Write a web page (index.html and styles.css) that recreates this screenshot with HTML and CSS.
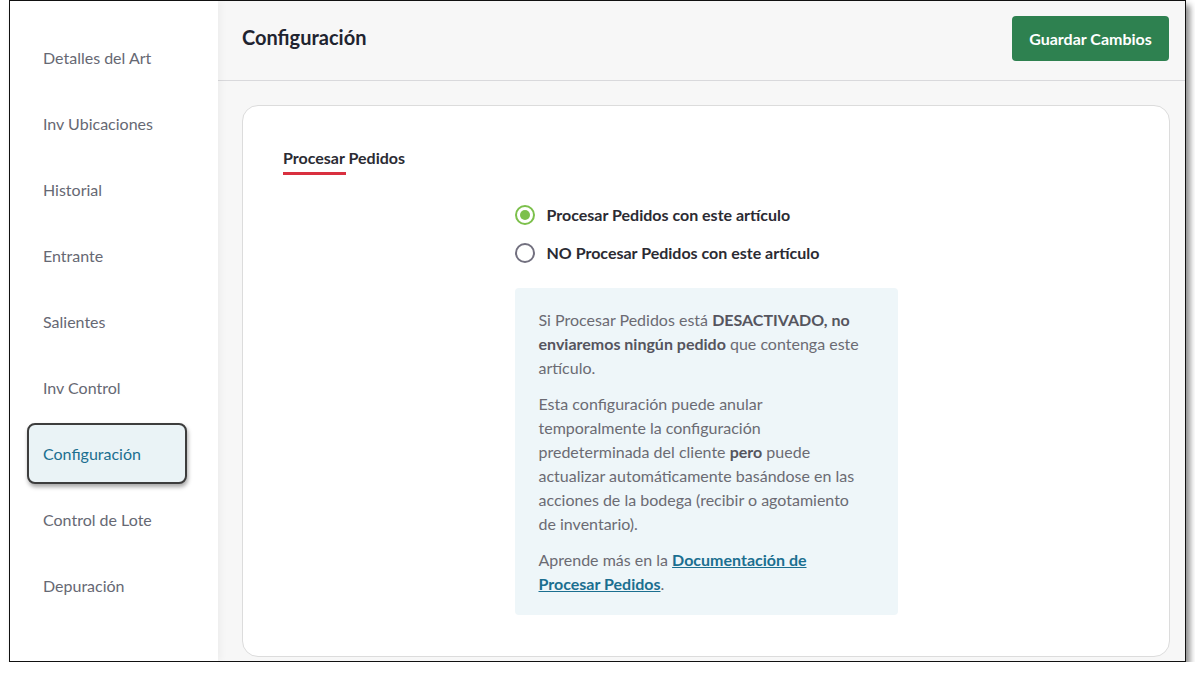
FILE: index.html
```html
<!DOCTYPE html>
<html lang="es">
<head>
<meta charset="utf-8">
<title>Configuración</title>
<link rel="stylesheet" href="styles.css">
</head>
<body>
<div class="frame">
  <nav class="sidebar">
    <a class="nav-item">Detalles del Art</a>
    <a class="nav-item">Inv Ubicaciones</a>
    <a class="nav-item">Historial</a>
    <a class="nav-item">Entrante</a>
    <a class="nav-item">Salientes</a>
    <a class="nav-item">Inv Control</a>
    <a class="nav-item active">Configuración</a>
    <a class="nav-item">Control de Lote</a>
    <a class="nav-item">Depuración</a>
  </nav>
  <main class="main">
    <header class="header">
      <h1 class="title">Configuración</h1>
      <a class="btn-save" role="button">Guardar Cambios</a>
    </header>
    <section class="card">
      <div class="tab">Procesar Pedidos</div>
      <div class="content">
        <div class="options">
          <label class="option">
            <span class="radio checked"></span>
            <span>Procesar Pedidos con este artículo</span>
          </label>
          <label class="option">
            <span class="radio"></span>
            <span>NO Procesar Pedidos con este artículo</span>
          </label>
        </div>
        <div class="info">
          <p>Si Procesar Pedidos está <strong>DESACTIVADO, no enviaremos ningún pedido</strong> que contenga este artículo.</p>
          <p>Esta configuración puede anular temporalmente la configuración predeterminada del cliente <strong>pero</strong> puede actualizar automáticamente basándose en las acciones de la bodega (recibir o agotamiento de inventario).</p>
          <p>Aprende más en la <a class="link">Documentación de Procesar Pedidos</a>.</p>
        </div>
      </div>
    </section>
  </main>
</div>
</body>
</html>
```
FILE: styles.css
```css
* { box-sizing: border-box; }
html, body { margin: 0; padding: 0; background: #fff; }
body {
  font-family: Lato, "Open Sans", "Liberation Sans", sans-serif;
  padding-left: 9px;
}
.frame {
  width: 1177px;
  height: 662px;
  border: 1px solid #111;
  display: flex;
  box-shadow: 4px 5px 6px rgba(0,0,0,0.45);
  background: #f7f7f7;
  overflow: hidden;
}
.sidebar {
  width: 208px;
  flex: none;
  background: #fff;
  padding-top: 23px;
  display: flex;
  flex-direction: column;
  box-shadow: 2px 0 8px rgba(0,0,0,0.05);
  position: relative;
  z-index: 1;
}
.nav-item {
  display: flex;
  align-items: center;
  height: 66px;
  padding-left: 33px;
  font-size: 16px;
  color: #666873;
  text-decoration: none;
}
.nav-item.active {
  height: 61px;
  width: 160px;
  margin: 3px 0 2px 17px;
  padding-left: 14px;
  border: 2px solid #3d3d3d;
  border-radius: 8px;
  background: #eaf3f6;
  color: #1b6f90;
  box-shadow: 1px 3px 4px rgba(0,0,0,0.35);
}
.main {
  flex: 1;
  display: flex;
  flex-direction: column;
  background: #f7f7f7;
}
.header {
  height: 80px;
  border-bottom: 1px solid #d9d9dc;
  display: flex;
  align-items: center;
  justify-content: space-between;
  padding: 0 16px 4px 24px;
}
.title {
  margin: 0 0 3px;
  font-size: 20px;
  font-weight: 700;
  color: #1f2430;
}
.btn-save {
  display: flex;
  align-items: center;
  justify-content: center;
  width: 157px;
  height: 45px;
  border-radius: 4px;
  background: #2e8150;
  color: #fff;
  font-size: 16px;
  font-weight: 700;
  text-decoration: none;
}
.card {
  margin: 24px 15px 0 24px;
  height: 552px;
  background: #fff;
  border: 1px solid #dcdcdc;
  border-radius: 16px;
  padding: 42px 40px 0 40px;
}
.tab {
  display: inline-block;
  font-size: 16px;
  font-weight: 700;
  color: #2b2b33;
  line-height: 20px;
  position: relative;
  padding-bottom: 6px;
}
.tab::after {
  content: "";
  position: absolute;
  left: 0;
  bottom: -1px;
  width: 63px;
  height: 3px;
  background: #d9303f;
}
.content {
  width: 383px;
  margin: 31px auto 0;
}
.options {
  display: flex;
  flex-direction: column;
  gap: 18px;
  margin-bottom: 25px;
}
.option {
  display: flex;
  align-items: center;
  gap: 12px;
  font-size: 16px;
  font-weight: 700;
  color: #2b2b33;
  line-height: 20px;
}
.radio {
  width: 20px;
  height: 20px;
  border-radius: 50%;
  border: 2px solid #72707f;
  flex: none;
  position: relative;
}
.radio.checked {
  border-color: #7cc04b;
}
.radio.checked::after {
  content: "";
  position: absolute;
  left: 3px;
  top: 3px;
  width: 10px;
  height: 10px;
  border-radius: 50%;
  background: #7cc04b;
}
.info {
  background: #eef6f9;
  border-radius: 4px;
  padding: 20px 35px 19px 24px;
  font-size: 16px;
  line-height: 24px;
  color: #6b6b73;
}
.info p { margin: 0 0 12px; }
.info p:last-child { margin-bottom: 0; }
.info strong { color: #55555e; }
.link {
  color: #1b6f90;
  font-weight: 700;
  text-decoration: underline;
}
```
